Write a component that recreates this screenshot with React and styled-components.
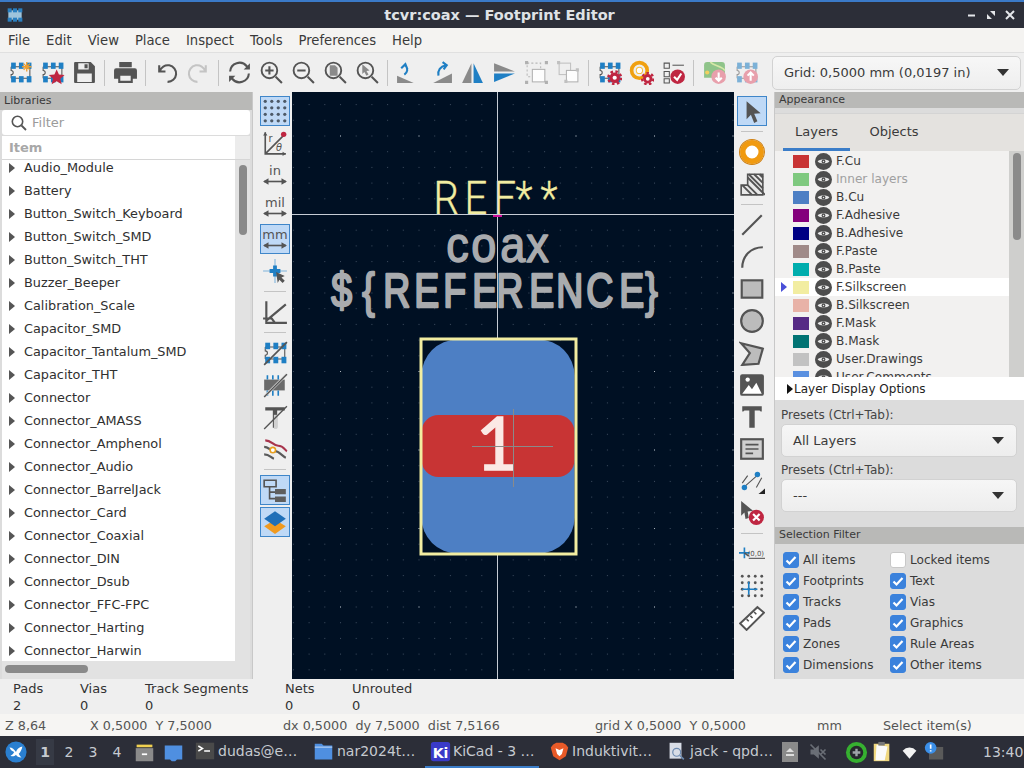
import React from 'react';
import styled, { createGlobalStyle } from 'styled-components';

const GlobalStyle = createGlobalStyle`
    html, body { margin: 0; padding: 0; height: 100%; overflow: hidden; }
    body { font-family: "DejaVu Sans", sans-serif; font-size: 13px; color: #333; background: #efefef; }
`;

const BLUE = '#1f7fc4';
const RED = '#bf2641';
const DARK = '#545454';

const libraries = ['Audio_Module', 'Battery', 'Button_Switch_Keyboard', 'Button_Switch_SMD', 'Button_Switch_THT', 'Buzzer_Beeper', 'Calibration_Scale', 'Capacitor_SMD', 'Capacitor_Tantalum_SMD', 'Capacitor_THT', 'Connector', 'Connector_AMASS', 'Connector_Amphenol', 'Connector_Audio', 'Connector_BarrelJack', 'Connector_Card', 'Connector_Coaxial', 'Connector_DIN', 'Connector_Dsub', 'Connector_FFC-FPC', 'Connector_Harting', 'Connector_Harwin'];

const layers = [
    ['F.Cu', '#c83434'], ['Inner layers', '#7fc97f', true], ['B.Cu', '#4d7fc4'], ['F.Adhesive', '#84007c'],
    ['B.Adhesive', '#000084'], ['F.Paste', '#a08a88'], ['B.Paste', '#00adad'], ['F.Silkscreen', '#f2eda1'],
    ['B.Silkscreen', '#e8b2a7'], ['F.Mask', '#562a85'], ['B.Mask', '#017373'], ['User.Drawings', '#c2c2c2'], ['User.Comments', '#5a90e0'],
];

const filters = [['All items', true], ['Locked items', false], ['Footprints', true], ['Text', true], ['Tracks', true], ['Vias', true], ['Pads', true], ['Graphics', true], ['Zones', true], ['Rule Areas', true], ['Dimensions', true], ['Other items', true]];

const stats = [['Pads', '2', 67], ['Vias', '0', 65], ['Track Segments', '0', 140], ['Nets', '0', 67], ['Unrouted', '0', 100]];

const Page = styled.div`
    width: 1024px;
    height: 768px;
    display: flex;
    flex-direction: column;
    overflow: hidden;
`;

const TitleBar = styled.div`
    height: 26px;
    border-top: 2px solid #3b7ac8;
    background: #2c2e38;
    color: #dfe2e6;
    display: flex;
    align-items: center;
    justify-content: space-between;
    padding: 0 9px 0 7px;
    font-size: 14.5px;
    font-weight: bold;
    flex: none;
`;

const TitleText = styled.div`
    flex: 1;
    text-align: center;
    padding-left: 9px;
`;

const WindowButtons = styled.div`
    display: flex;
    gap: 9px;
    align-items: center;
`;

const MenuBar = styled.div`
    height: 24px;
    background: #f4f3f1;
    display: flex;
    align-items: center;
    padding-left: 8px;
    gap: 16px;
    flex: none;
    color: #3a3a3a;
    font-size: 13.2px;
`;

const TopToolbar = styled.div`
    height: 40px;
    background: #efefef;
    border-top: 1px solid #e0e0e0;
    box-sizing: border-box;
    display: flex;
    align-items: center;
    padding-left: 4px;
    flex: none;
`;

const ToolButton = styled.div`
    width: ${p => (p.$vertical ? 30 : 32)}px;
    height: ${p => (p.$vertical ? 30 : 32)}px;
    margin: ${p => (p.$vertical ? 1 : 0)}px;
    box-sizing: border-box;
    flex: none;
    display: flex;
    align-items: center;
    justify-content: center;
    background: ${p => (p.$active ? '#bfd9f6' : 'transparent')};
    border: 1px solid ${p => (p.$active ? '#3f86c9' : 'transparent')};
`;

const Separator = styled.div`
    width: 1px;
    height: 26px;
    background: #c4c4c4;
    margin: 0 4px;
    flex: none;
`;

const HSeparator = styled.div`
    height: 1px;
    width: 22px;
    background: #c4c4c4;
    margin: 4px 0;
    flex: none;
`;

const GridCombo = styled.div`
    width: 249px;
    height: 34px;
    margin-left: 10px;
    box-sizing: border-box;
    border: 1px solid #d2d2d2;
    border-radius: 5px;
    background: linear-gradient(#f7f7f7, #eeeeee);
    display: flex;
    align-items: center;
    justify-content: space-between;
    padding: 0 11px;
    color: #3a3a3a;
`;

const Caret = styled.span`
    width: 0;
    height: 0;
    border-left: 6px solid transparent;
    border-right: 6px solid transparent;
    border-top: 7px solid #333;
`;

const Main = styled.div`
    height: 587px;
    display: flex;
    flex: none;
`;

const LeftPanel = styled.div`
    width: 253px;
    flex: none;
    display: flex;
    flex-direction: column;
    background: #dcdcdc;
    border-right: 1px solid #c8c8c8;
    box-sizing: border-box;
    margin-right: 5px;
`;

const DockTitle = styled.div`
    height: ${p => p.$h || 18}px;
    margin-top: ${p => p.$mt || 0}px;
    flex: none;
    background: #b9b9b7;
    font-size: 11px;
    line-height: ${p => (p.$h || 18) - 1}px;
    padding-left: 4px;
    color: #3a3a3a;
`;

const FilterBox = styled.div`
    height: 25px;
    margin: 0 2px 1px;
    background: #fff;
    border-radius: 3px;
    display: flex;
    align-items: center;
    padding-left: 9px;
    gap: 5px;
    color: #9b9b9b;
    flex: none;
`;

const Tree = styled.div`
    flex: 1;
    margin: 0 2px;
    background: #fff;
    display: flex;
    flex-direction: column;
    min-height: 0;
`;

const TreeHead = styled.div`
    height: 24px;
    flex: none;
    display: flex;
    border-bottom: 1px solid #d6d6d6;
    box-sizing: border-box;
    font-weight: bold;
    color: #a8a8a8;
    line-height: 24px;
    padding-left: 7px;
    position: relative;
`;

const HeadCorner = styled.div`
    position: absolute;
    right: 0;
    top: 0;
    width: 15px;
    height: 23px;
    background: #ececec;
`;

const TreeBody = styled.div`
    flex: 1;
    display: flex;
    min-height: 0;
`;

const TreeList = styled.div`
    flex: 1;
    overflow: hidden;
`;

const TreeRows = styled.div`
    margin-top: -4px;
`;

const TreeRow = styled.div`
    height: 23px;
    display: flex;
    align-items: center;
    gap: 9px;
    padding-left: 7px;
    color: #303030;
    white-space: nowrap;
    font-size: 12.85px;
`;

const TreeArrow = styled.span`
    width: 0;
    height: 0;
    border-top: 5px solid transparent;
    border-bottom: 5px solid transparent;
    border-left: 6px solid #555;
    flex: none;
`;

const VScroll = styled.div`
    width: 15px;
    flex: none;
    background: #e2e2e2;
    padding: 5px 3px 0 4px;
    box-sizing: border-box;
`;

const ScrollThumb = styled.div`
    height: ${p => p.$h}px;
    background: #8a8a8a;
    border-radius: 4px;
`;

const HScroll = styled.div`
    height: 18px;
    flex: none;
    background: #e2e2e2;
    padding: 4px 0 0 3px;
    box-sizing: border-box;
`;

const HThumb = styled.div`
    width: 83px;
    height: 8px;
    background: #8a8a8a;
    border-radius: 4px;
`;

const VToolbar = styled.div`
    width: ${p => p.$w}px;
    flex: none;
    box-sizing: border-box;
    background: #efefef;
    display: flex;
    flex-direction: column;
    align-items: flex-start;
    padding: 3px 0 0 ${p => p.$pad}px;
    ${HSeparator} { margin: 4px 0 4px 5px; }
`;

const CanvasArea = styled.div`
    width: 442px;
    flex: none;
    background: #001023;
`;

const CanvasSvg = styled.svg`
    display: block;
`;

const RightPanel = styled.div`
    width: 250px;
    flex: none;
    margin-left: 4px;
    background: #dcdcdc;
    border-left: 1px solid #c8c8c8;
    box-sizing: border-box;
    display: flex;
    flex-direction: column;
`;

const TabsBox = styled.div`
    margin-top: 5px;
    flex: none;
    background: #e4e2df;
    border-top: 1px solid #d4d4d4;
`;

const Tabs = styled.div`
    height: 37px;
    display: flex;
    color: #3a3a3a;
`;

const Tab = styled.div`
    width: ${p => p.$w}px;
    margin-left: ${p => p.$ml || 0}px;
    text-align: center;
    line-height: 36px;
    box-sizing: border-box;
    border-bottom: 3px solid ${p => (p.$active ? '#3b7dc8' : 'transparent')};
`;

const LayerWrap = styled.div`
    height: 226px;
    display: flex;
    overflow: hidden;
    background: #f2f1f0;
`;

const LayerList = styled.div`
    flex: 1;
    overflow: hidden;
    padding-top: 1px;
`;

const LayerRow = styled.div`
    height: 18px;
    display: flex;
    align-items: center;
    background: ${p => (p.$current ? '#fff' : 'transparent')};
    color: ${p => (p.$dim ? '#a0a0a0' : '#3a3a3a')};
    font-size: 12.1px;
    position: relative;
`;

const CurrentMark = styled.span`
    position: absolute;
    left: 6px;
    top: 4px;
    width: 0;
    height: 0;
    border-top: 5px solid transparent;
    border-bottom: 5px solid transparent;
    border-left: 6px solid #4a50d8;
`;

const Swatch = styled.span`
    width: 16px;
    height: 13px;
    margin: 0 6px 0 18px;
    background: ${p => p.$color};
    flex: none;
`;

const LayerName = styled.span`
    margin-left: 4px;
    white-space: nowrap;
`;

const LayerScroll = styled.div`
    width: 15px;
    flex: none;
    background: #cfcfcd;
    padding: 2px 3px 0 4px;
    box-sizing: border-box;
`;

const DisplayOptions = styled.div`
    height: 23px;
    flex: none;
    background: #fff;
    display: flex;
    align-items: center;
    gap: 1px;
    padding-left: 12px;
    font-size: 12px;
    color: #222;
`;

const OptionsArrow = styled.span`
    width: 0;
    height: 0;
    border-top: 5px solid transparent;
    border-bottom: 5px solid transparent;
    border-left: 6px solid #111;
`;

const PresetLabel = styled.div`
    font-size: 12px;
    color: #444;
    padding-left: 6px;
    height: 15px;
    line-height: 15px;
    margin-top: ${p => p.$mt}px;
    flex: none;
`;

const PresetSelect = styled.div`
    height: 33px;
    flex: none;
    margin: 1px 7px 0 6px;
    box-sizing: border-box;
    border: 1px solid #d2d2d2;
    border-radius: 5px;
    background: linear-gradient(#f6f6f6, #ededed);
    display: flex;
    align-items: center;
    justify-content: space-between;
    padding: 0 12px 0 11px;
    color: #3a3a3a;
`;

const FilterGrid = styled.div`
    display: grid;
    grid-template-columns: 107px 120px;
    grid-auto-rows: 21px;
    padding: 5px 0 0 8px;
    font-size: 12.1px;
    color: #3a3a3a;
`;

const FilterItem = styled.div`
    display: flex;
    align-items: center;
    gap: 4px;
    white-space: nowrap;
`;

const CheckBox = styled.span`
    width: 16px;
    height: 16px;
    border-radius: 3px;
    box-sizing: border-box;
    flex: none;
    display: flex;
    align-items: center;
    justify-content: center;
    background: ${p => (p.$on ? '#3b82dc' : '#fff')};
    border: 1px solid ${p => (p.$on ? '#3b82dc' : '#c8c8c8')};
`;

const Messages = styled.div`
    height: 35px;
    flex: none;
    background: #efefef;
    display: flex;
    padding: 1px 0 0 13px;
    color: #333;
    box-sizing: border-box;
`;

const StatColumn = styled.div`
    width: ${p => p.$w}px;
    flex: none;
    line-height: 17px;
`;

const StatusBar = styled.div`
    height: 22px;
    flex: none;
    background: #f6f5f3;
    display: flex;
    align-items: center;
    padding-left: 5px;
    color: #555;
    white-space: pre;
    font-size: 12.75px;
`;

const StatusCell = styled.div`
    width: ${p => p.$w}px;
    flex: none;
`;

const TaskBar = styled.div`
    height: 32px;
    flex: none;
    background: #2c2e38;
    color: #c6cad0;
    display: flex;
    align-items: center;
    font-size: 14px;
    white-space: nowrap;
    padding-left: 5px;
`;

const Desk = styled.div`
    width: ${p => p.$w}px;
    margin-left: ${p => p.$ml || 0}px;
    height: 26px;
    line-height: 26px;
    text-align: center;
    font-weight: ${p => (p.$active ? 'bold' : 'normal')};
    background: ${p => (p.$active ? '#363a45' : 'transparent')};
    flex: none;
`;

const TaskItem = styled.div`
    width: ${p => p.$w}px;
    height: 32px;
    margin-left: ${p => p.$ml || 0}px;
    flex: none;
    box-sizing: border-box;
    display: flex;
    align-items: center;
    gap: 3px;
    padding-left: ${p => p.$pl || 0}px;
    border-bottom: 2px solid ${p => (p.$active ? '#3b7dc8' : 'transparent')};
`;

const Tray = styled.div`
    width: ${p => p.$w}px;
    margin-left: ${p => p.$ml || 0}px;
    flex: none;
    display: flex;
    justify-content: center;
    align-items: center;
`;

const Clock = styled.div`
    margin-left: 38px;
`;

const Glyph = styled.svg.attrs(p => ({ viewBox: p.$box || '0 0 24 24' }))`
    width: ${p => p.$size || 24}px;
    height: ${p => p.$size || 24}px;
    flex: none;
    display: block;
`;

const Fp = ({ fade }) => (
    <g opacity={fade ? 0.55 : 1}>
        <path d="M3 6.500h18M3 17.500h18M3 6.500v3.500a2 2 0 010 4v3.500M21 6.500v11" fill="none" stroke={DARK} strokeWidth="1" />
        {[2, 9.5, 17].map(x => <rect key={x} x={x + 1} y="2.500" width="4.500" height="6" fill={BLUE} />)}
        {[2, 9.5, 17].map(x => <rect key={'b' + x} x={x + 1} y="15.500" width="4.500" height="6" fill={BLUE} />)}
    </g>
);

const Gear = ({ x, y, r = 5 }) => (
    <g transform={`translate(${x} ${y})`}>
        <circle r={r * 1.2} fill="none" stroke={RED} strokeWidth={r * 0.5} strokeDasharray="2.400 2.300" />
        <circle r={r} fill={RED} />
        <circle r={r * 0.4} fill="#fff" />
    </g>
);

const Units = ({ label }) => (
    <>
        <text x="12" y="12" textAnchor="middle" fontSize="12" fill={DARK} fontFamily="DejaVu Sans">{label}</text>
        <path d="M2 18h20" stroke={DARK} strokeWidth="1.500" />
        <path d="M1 18l5-3v6zM23 18l-5-3v6z" fill={DARK} />
    </>
);

const icons = {
    fpNew: <><Fp /><path d="M18 2v9M13.500 6.500h9M15 3.500l6 6M21 3.500l-6 6" stroke="#f0a030" strokeWidth="1.300" /></>,
    fpStar: <><Fp /><path d="M16 9l2.200 5 5.400.4-4.100 3.500 1.300 5.300-4.800-2.900-4.800 2.900 1.300-5.300-4.100-3.500 5.400-.4z" fill={RED} /></>,
    save: <path fillRule="evenodd" d="M2 3a1 1 0 011-1h15l4 4v15a1 1 0 01-1 1H3a1 1 0 01-1-1zM6 3v6h10V3zM12 4h3v4h-3zM5 13v8h14v-8z" fill={DARK} />,
    print: <path fillRule="evenodd" d="M6 2h12v5H6zM3 8h18a2 2 0 012 2v8h-4v4H5v-4H1v-8a2 2 0 012-2zM7 15v5h10v-5z" fill={DARK} />,
    undo: <path d="M5 5v6h6M5.500 11A8 8 0 1113 21" fill="none" stroke={DARK} strokeWidth="2" />,
    redo: <path d="M19 5v6h-6M18.500 11A8 8 0 1011 21" fill="none" stroke="#c4c4c4" strokeWidth="2" />,
    refresh: <><path d="M3 11a9 9 0 0116-5l2 2M21 13a9 9 0 01-16 5l-2-2" fill="none" stroke={DARK} strokeWidth="2" /><path d="M22 3v6h-6zM2 21v-6h6z" fill={DARK} /></>,
    zoomIn: <><circle cx="10" cy="10" r="7.500" fill="none" stroke={DARK} strokeWidth="1.800" /><path d="M16 16l6 6M6 10h8M10 6v8" stroke={DARK} strokeWidth="2" /></>,
    zoomOut: <><circle cx="10" cy="10" r="7.500" fill="none" stroke={DARK} strokeWidth="1.800" /><path d="M16 16l6 6M6 10h8" stroke={DARK} strokeWidth="2" /></>,
    zoomFit: <><circle cx="10" cy="10" r="7.500" fill="none" stroke={DARK} strokeWidth="1.800" /><path d="M16 16l6 6" stroke={DARK} strokeWidth="2" /><path d="M6.500 5h5l2.500 2.500V15H6.500z" fill="#8a8a8a" /></>,
    zoomSel: <><circle cx="10" cy="10" r="7.500" fill="none" stroke={DARK} strokeWidth="1.800" /><path d="M16 16l6 6" stroke={DARK} strokeWidth="2" /><path d="M7 4l7 6-3 .5 2 3.500-2 1-2-3.500-2 2z" fill="#8a8a8a" /></>,
    rotL: <><path d="M1 15l16 7H1z" fill="#8a8a8a" /><path d="M8 14c3-2 4-6 1-9M5 8l4-4 2 5" fill="none" stroke={BLUE} strokeWidth="2" /></>,
    rotR: <><path d="M23 13v9H5z" fill="#8a8a8a" /><path d="M10 15c-1-5 2-9 7-10M14 2l4 3-3 4" fill="none" stroke={BLUE} strokeWidth="2" /></>,
    flipH: <><path d="M11 3v19H2z" fill="#8a8a8a" /><path d="M13 3v19h9z" fill={BLUE} /></>,
    flipV: <><path d="M2 3l20 8H2z" fill="#8a8a8a" /><path d="M2 13h20L2 21z" fill={BLUE} /></>,
    group: <><path d="M3 3h13v13H3z" fill="none" stroke="#b8b8b8" strokeDasharray="2 2" /><rect x="8" y="9" width="12" height="12" fill="#fdfdfd" stroke="#b0b0b0" /><path d="M1 1h3v3H1zM20 1h3v3h-3zM1 20h3v3H1zM20 20h3v3h-3z" fill="#b0b0b0" /></>,
    ungroup: <><rect x="3" y="3" width="11" height="11" fill="none" stroke="#c0c0c0" /><rect x="10" y="10" width="11" height="11" fill="#fdfdfd" stroke="#b0b0b0" /><path d="M1 1h3v3H1zM19 8h3v3h-3zM8 19h3v3H8z" fill="#c0c0c0" /></>,
    fpGear: <><Fp /><Gear x={17} y={17} /></>,
    padGear: <><circle cx="10" cy="10" r="7.500" fill="none" stroke="#f0a010" strokeWidth="3.500" /><circle cx="10" cy="10" r="3" fill="#fff" stroke="#f6c040" strokeWidth="1" /><Gear x={18} y={18} r={4.500} /></>,
    drc: <><path d="M3 3h5v5H3zM3 11h5v5H3zM3 18h5v4H3z" fill="none" stroke={DARK} /><path d="M11 5h11" stroke={DARK} /><circle cx="16" cy="16" r="7" fill={RED} /><path d="M12.500 16l3 3 4-6" fill="none" stroke="#fff" strokeWidth="2" /></>,
    pcbIn: <><path d="M2 5a3 3 0 013-3h14a3 3 0 013 3v12H2z" fill="#8fc48a" /><path d="M8 2c4 4 10 3 14 8" fill="none" stroke="#d6e8a8" strokeWidth="1.500" /><circle cx="5" cy="12" r="2" fill="#f2d060" /><circle cx="16" cy="16" r="7" fill="#e8a0ac" /><path d="M16 12v8M13 17l3 3 3-3" fill="none" stroke="#fff" strokeWidth="2" /></>,
    pcbOut: <><Fp fade /><circle cx="16" cy="16" r="7" fill="#e8a0ac" /><path d="M16 20v-8M13 15l3-3 3 3" fill="none" stroke="#fff" strokeWidth="2" /></>,
    grid: <>{[3, 9, 15, 21].flatMap(y => [3, 9, 15, 21].map(x => <circle key={x + '-' + y} cx={x} cy={y} r="1.500" fill="#4d5a68" />))}</>,
    polar: <><path d="M3 2v20h19M3 22L20 5" fill="none" stroke={DARK} strokeWidth="1.500" /><path d="M1 5l2-3 2 3M19 20l3 2-3 2" fill={DARK} /><circle cx="20" cy="4" r="2.500" fill={RED} /><text x="6" y="11" fontSize="9" fill={DARK} fontFamily="DejaVu Sans">r</text><text x="13" y="19" fontSize="9" fontStyle="italic" fill={DARK} fontFamily="DejaVu Sans">θ</text></>,
    inch: <Units label="in" />,
    mil: <Units label="mil" />,
    mm: <Units label="mm" />,
    cross: <><path d="M12 1v22M1 12h22" stroke="#7fb4dc" /><path d="M12 7v10M7 12h10" stroke={BLUE} strokeWidth="3.500" /><path d="M13 13l8 3.500-3 1.500 3 3-2 2-3-3-1.500 3z" fill={DARK} /></>,
    angle: <path d="M4 2v20h19M4 20L22 5M1 18h8l3 4" fill="none" stroke={DARK} strokeWidth="2" />,
    fpRat: <><Fp /><path d="M2 23L23 2" stroke={DARK} strokeWidth="1.500" /></>,
    chip: <><rect x="2" y="7" width="19" height="10" fill="#6a6a6a" /><path d="M5 3v4M10 3v4M15 3v4M5 17v5M10 17v5M15 17v5" stroke={BLUE} strokeWidth="1.500" /><path d="M2 23L23 2" stroke="#ddd" strokeWidth="2.500" /><path d="M2 23L23 2" stroke={DARK} strokeWidth="1.200" /></>,
    textOff: <><path d="M3 3h18v3H14v16h-4V6H3z" fill={DARK} /><path d="M11 10h3v13h-3z" fill="#d0d0d0" /><path d="M2 23L23 2" stroke={DARK} strokeWidth="1.200" /></>,
    tracks: <><path d="M3 4c6 0 7 5 12 5s6 4 8 5" fill="none" stroke="#a8344c" strokeWidth="2" /><path d="M2 10c4 0 6 4 10 4s7 5 10 6" fill="none" stroke="#5a5a5a" strokeWidth="2" /><path d="M2 17c5 0 6 3 9 4" fill="none" stroke="#5a5a5a" strokeWidth="2" /><circle cx="10" cy="13" r="2.500" fill="#fff" stroke="#e8a020" strokeWidth="1.500" /></>,
    tree: <><path d="M2 3h11v6H2zM7 9v11h5M7 14h5" fill="none" stroke={DARK} strokeWidth="1.500" /><path d="M12 11h10v5H12zM12 18h10v5H12z" fill="#5e5e5e" /></>,
    layers: <><path d="M12 10l10 6-10 7L2 16z" fill="#f09a20" /><path d="M12 2l10 7-10 7L2 9z" fill="#1f6fb8" /></>,
    arrow: <path d="M7 3l13 11-6 .5 3 7-3 1.500-3-7.500-4 4z" fill={DARK} />,
    ring: <><circle cx="12" cy="12" r="8.500" fill="#fff" stroke="#f09a10" strokeWidth="5" /><circle cx="12" cy="12" r="11.500" fill="none" stroke="#d08010" strokeWidth="1" /></>,
    hatch: <><path d="M8 3h14v19H2v-9h6z" fill="#e8e8e8" stroke={DARK} strokeWidth="1.500" /><path d="M9 3l13 13M14 3l8 8M3 13l9 9M8 13l9 9M8 6l16 16M19 3l3 3" stroke={DARK} strokeWidth="1.800" /></>,
    line: <path d="M3 21L21 3" stroke={DARK} strokeWidth="2" />,
    arc: <path d="M3 22C3 11 11 3 22 3" fill="none" stroke={DARK} strokeWidth="2" />,
    rect: <rect x="2.500" y="4" width="19" height="16" fill="#bcbcbc" stroke={DARK} strokeWidth="2" />,
    circle: <circle cx="12" cy="12" r="10" fill="#bcbcbc" stroke={DARK} strokeWidth="2" />,
    poly: <path d="M2 3l20 5-4 14-15 1 7-11z" fill="#bcbcbc" stroke={DARK} strokeWidth="2" />,
    image: <><rect x="1" y="2" width="22" height="20" rx="2" fill={DARK} /><path d="M3 20l6-8 3 4 4-6 5 10z" fill="#fff" /><circle cx="8" cy="7" r="2" fill="#fff" /></>,
    text: <path d="M3 2h18v5h-1l-1-1h-4.500v16h-5V6H5L4 7H3z" fill={DARK} />,
    textbox: <><rect x="2" y="3" width="20" height="18" fill="#d0d0d0" stroke={DARK} strokeWidth="2" /><path d="M6 8h12M6 12h12M6 16h7" stroke={DARK} strokeWidth="1.500" /></>,
    dim: <><path d="M3 19L19 5M8 7l-5 7M21 9l-5 9" fill="none" stroke={DARK} /><circle cx="5" cy="18" r="2.500" fill={BLUE} /><circle cx="17" cy="6" r="2.500" fill={BLUE} /><path d="M24 19v5h-6z" fill="#222" /></>,
    del: <><path d="M2 1l11 9-5 .5 1 6-3 1-1-6-3 3z" fill={DARK} /><circle cx="16" cy="16" r="7" fill={RED} /><path d="M13 13l6 6M19 13l-6 6" stroke="#fff" strokeWidth="2" /></>,
    origin: <><path d="M5 6v10M0 11h10" stroke={BLUE} strokeWidth="1.500" /><path d="M5 11l4 3" stroke={DARK} strokeWidth="1.500" /><text x="8" y="14" fontSize="6.400" fill={DARK} fontFamily="DejaVu Sans">(0,0)</text><path d="M9 16h15" stroke={DARK} /></>,
    gridOrigin: <>{[3, 9, 15, 21].flatMap(y => [3, 9, 15, 21].map(x => <circle key={x + '-' + y} cx={x} cy={y} r="1.300" fill={DARK} />))}<path d="M9 8v12M3 15h14" stroke={BLUE} strokeWidth="1.500" /></>,
    measure: <><path d="M1 17L17 2l6 5L7 23z" fill="#fff" stroke={DARK} strokeWidth="1.800" /><path d="M7 13l2 2M10.500 10l2 2M14 6.500l2 2" stroke={DARK} strokeWidth="1.500" /></>,
};

const Icon = ({ name, size }) => <Glyph $size={size}>{icons[name]}</Glyph>;

const topTools = ['fpNew', 'fpStar', 'save', '|', 'print', '|', 'undo', 'redo', '|', 'refresh', 'zoomIn', 'zoomOut', 'zoomFit', 'zoomSel', '|', 'rotL', 'rotR', 'flipH', 'flipV', 'group', 'ungroup', '|', 'fpGear', 'padGear', 'drc', '|', 'pcbIn', 'pcbOut'];
const leftTools = [['grid', 1], ['polar'], ['inch'], ['mil'], ['mm', 1], ['cross'], '|', ['angle'], '|', ['fpRat'], ['chip'], ['textOff'], ['tracks'], '|', ['tree', 1], ['layers', 1]];
const rightTools = [['arrow', 1], '|', ['ring'], ['hatch'], '|', ['line'], ['arc'], ['rect'], ['circle'], ['poly'], ['image'], ['text'], ['textbox'], ['dim'], ['del'], '|', ['origin'], ['gridOrigin'], ['measure']];

const VTools = ({ items, w, pad }) => (
    <VToolbar $w={w} $pad={pad}>
        {items.map((t, i) => (t === '|'
            ? <HSeparator key={i} />
            : <ToolButton key={i} $vertical $active={t[1]}><Icon name={t[0]} size={26} /></ToolButton>))}
    </VToolbar>
);

const Eye = () => (
    <Glyph $size={17} $box="0 0 16 16">
        <circle cx="8" cy="8" r="8" fill="#4d4d4d" />
        <path d="M2.500 8C4 5.500 12 5.500 13.500 8 12 10.500 4 10.500 2.500 8z" fill="#e8e8e8" />
        <circle cx="8" cy="8" r="1.800" fill="#4d4d4d" />
        <circle cx="8" cy="8" r=".7" fill="#e8e8e8" />
    </Glyph>
);

const Tick = () => (
    <Glyph $size={12} $box="0 0 12 12">
        <path d="M1.500 6.500l3 3 6-6.500" fill="none" stroke="#fff" strokeWidth="2.200" />
    </Glyph>
);

// board text is a stroke font in the picture, so every glyph gets its own x
const BoardText = ({ text, xs, y, size, scale, lsb, ...rest }) => (
    <text
        transform={`translate(${xs[0]} ${y}) scale(${scale} 1)`}
        x={xs.map(x => (x - xs[0]) / scale - lsb).join(' ')}
        fontSize={size}
        strokeLinejoin="round"
        {...rest}
    >
        {text}
    </text>
);

const Canvas = () => (
    <CanvasSvg width="442" height="587" viewBox="292 92 442 587">
        <defs>
            <pattern id="dots" x="497" y="214" width="15.700" height="15.700" patternUnits="userSpaceOnUse">
                <rect width="1" height="1" fill="#3e4d60" />
            </pattern>
            <pattern id="dots5" x="497" y="214" width="78.500" height="78.500" patternUnits="userSpaceOnUse">
                <rect width="1" height="1" fill="#aab2bb" />
            </pattern>
        </defs>
        <rect x="292" y="92" width="442" height="587" fill="url(#dots)" />
        <rect x="292" y="92" width="442" height="587" fill="url(#dots5)" />
        <BoardText text="REF**" xs={[437, 468, 497, 519, 544]} y={214} size={47} scale={0.85} lsb={4} fontFamily="Roboto" fontWeight="300" fill="#f2eda1" stroke="#f2eda1" strokeWidth="0.400" />
        <path d="M292 214.500h442M497.500 92v587" stroke="#c6ccd4" strokeWidth="1" />
        <path d="M493 216h9" stroke="#d0109a" strokeWidth="2" />
        <g fontFamily="Liberation Sans" fill="#a9abae" stroke="#a9abae">
            <BoardText text="coax" xs={[448, 473, 502, 528]} y={262} size={50} scale={0.9} lsb={2} strokeWidth="1.500" />
            <BoardText text={'${REFERENCE}'} xs={[334, 365, 386, 417, 446, 475, 499, 532, 559, 589, 622, 648]} y={307} size={48} scale={0.78} lsb={3.500} strokeWidth="2.400" />
        </g>
        <rect x="421.500" y="339.500" width="153" height="214" rx="36" fill="#4d7fc4" />
        <rect x="421.500" y="415" width="153" height="62" rx="17" fill="#c83434" />
        <rect x="421" y="339" width="155" height="215" fill="none" stroke="#f2eda1" strokeWidth="3" />
        <text x="497" y="470" textAnchor="middle" fontFamily="Lato" fontWeight="400" fontSize="73" fill="#fbe9e5" stroke="#fbe9e5" strokeWidth="1.500">1</text>
        <path d="M472 446.500h81M513.500 409v78" stroke="#8a8a8a" strokeWidth="1" />
    </CanvasSvg>
);

const Logo = () => (
    <Glyph $size={22} $box="0 0 24 24">
        <circle cx="12" cy="12" r="11.500" fill="#2a7fd0" />
        <path d="M5 7c3 0 5 2 7 5 1-3 3-5 7-6-1 4-2 6-4 8 1 2 2 3 3 4-3 0-5-1-6-3-2 2-4 2-6 1 2-1 3-2 4-4-2-1-4-2-5-5z" fill="#fff" />
    </Glyph>
);

const App = () => (
    <Page>
        <GlobalStyle />
        <TitleBar>
            <Glyph $size={16} $box="0 0 24 24">
                <rect x="2" y="5" width="20" height="14" fill="#9fc4dc" />
                {[1, 9, 17].map(x => <rect key={x} x={x} y="2" width="6" height="6" fill="#2a7fc0" />)}
                {[1, 9, 17].map(x => <rect key={x} x={x} y="16" width="6" height="6" fill="#2a7fc0" />)}
            </Glyph>
            <TitleText>tcvr:coax — Footprint Editor</TitleText>
            <WindowButtons>
                <Glyph $size={10} $box="0 0 10 10"><path d="M1 5.500h7" stroke="#e4e6ea" strokeWidth="2" /></Glyph>
                <Glyph $size={10} $box="0 0 10 10"><path d="M4 1h5v5zM6 9H1V4z" fill="#e4e6ea" /></Glyph>
                <Glyph $size={10} $box="0 0 10 10"><path d="M1 1l8 8M9 1l-8 8" stroke="#e4e6ea" strokeWidth="2" /></Glyph>
            </WindowButtons>
        </TitleBar>
        <MenuBar>
            {['File', 'Edit', 'View', 'Place', 'Inspect', 'Tools', 'Preferences', 'Help'].map(m => <span key={m}>{m}</span>)}
        </MenuBar>
        <TopToolbar>
            {topTools.map((t, i) => (t === '|'
                ? <Separator key={i} />
                : <ToolButton key={i}><Icon name={t} size={25} /></ToolButton>))}
            <GridCombo>Grid: 0,5000 mm (0,0197 in)<Caret /></GridCombo>
        </TopToolbar>
        <Main>
            <LeftPanel>
                <DockTitle>Libraries</DockTitle>
                <FilterBox>
                    <Glyph $size={16} $box="0 0 16 16">
                        <circle cx="6.500" cy="6.500" r="5.200" fill="none" stroke="#555" strokeWidth="1.600" />
                        <path d="M10.500 10.500l4.500 4.500" stroke="#555" strokeWidth="1.800" />
                    </Glyph>
                    Filter
                </FilterBox>
                <Tree>
                    <TreeHead>Item<HeadCorner /></TreeHead>
                    <TreeBody>
                        <TreeList>
                            <TreeRows>
                                {libraries.map(l => <TreeRow key={l}><TreeArrow />{l}</TreeRow>)}
                            </TreeRows>
                        </TreeList>
                        <VScroll><ScrollThumb $h={70} /></VScroll>
                    </TreeBody>
                    <HScroll><HThumb /></HScroll>
                </Tree>
            </LeftPanel>
            <VTools items={leftTools} w={34} pad={1} />
            <CanvasArea><Canvas /></CanvasArea>
            <VTools items={rightTools} w={36} pad={2} />
            <RightPanel>
                <DockTitle $h={16}>Appearance</DockTitle>
                <TabsBox>
                    <Tabs>
                        <Tab $w={67} $ml={8} $active>Layers</Tab>
                        <Tab $w={88}>Objects</Tab>
                    </Tabs>
                    <LayerWrap>
                        <LayerList>
                            {layers.map(([name, color, dim]) => (
                                <LayerRow key={name} $dim={dim} $current={name === 'F.Silkscreen'}>
                                    {name === 'F.Silkscreen' && <CurrentMark />}
                                    <Swatch $color={color} />
                                    <Eye />
                                    <LayerName>{name}</LayerName>
                                </LayerRow>
                            ))}
                        </LayerList>
                        <LayerScroll><ScrollThumb $h={87} /></LayerScroll>
                    </LayerWrap>
                    <DisplayOptions><OptionsArrow />Layer Display Options</DisplayOptions>
                </TabsBox>
                <PresetLabel $mt={8}>Presets (Ctrl+Tab):</PresetLabel>
                <PresetSelect>All Layers<Caret /></PresetSelect>
                <PresetLabel $mt={6}>Presets (Ctrl+Tab):</PresetLabel>
                <PresetSelect>---<Caret /></PresetSelect>
                <DockTitle $h={17} $mt={15}>Selection Filter</DockTitle>
                <FilterGrid>
                    {filters.map(([name, on]) => (
                        <FilterItem key={name}>
                            <CheckBox $on={on}>{on && <Tick />}</CheckBox>
                            {name}
                        </FilterItem>
                    ))}
                </FilterGrid>
            </RightPanel>
        </Main>
        <Messages>
            {stats.map(([label, value, w]) => (
                <StatColumn key={label} $w={w}>{label}<br />{value}</StatColumn>
            ))}
        </Messages>
        <StatusBar>
            <StatusCell $w={85}>Z 8,64</StatusCell>
            <StatusCell $w={193}>X 0,5000  Y 7,5000</StatusCell>
            <StatusCell $w={312}>dx 0,5000  dy 7,5000  dist 7,5166</StatusCell>
            <StatusCell $w={222}>grid X 0,5000  Y 0,5000</StatusCell>
            <StatusCell $w={66}>mm</StatusCell>
            <StatusCell $w={120}>Select item(s)</StatusCell>
        </StatusBar>
        <TaskBar>
            <Logo />
            <Desk $w={18} $ml={9} $active>1</Desk>
            <Desk $w={30}>2</Desk>
            <Desk $w={18}>3</Desk>
            <Desk $w={30}>4</Desk>
            <Tray $w={20} $ml={2}>
                <Glyph $size={21}><path d="M3 3h18v3H3z" fill="#f0d050" /><path d="M2 7h20v15H2z" fill="#8a8a8a" /><path d="M9 14h6" stroke="#fff" strokeWidth="2" /></Glyph>
            </Tray>
            <Tray $w={20} $ml={9}>
                <Glyph $size={21}><path d="M2 4h20v16h-6l-2 2h-4l-2-2H2z" fill="#4f8fe0" /></Glyph>
            </Tray>
            <TaskItem $w={130} $pl={12}>
                <Glyph $size={20}><rect x="1" y="2" width="22" height="20" fill="#4a4a4a" /><path d="M4 6l5 3-5 3M11 12h7" fill="none" stroke="#fff" strokeWidth="1.800" /></Glyph>
                dudas@e…
            </TaskItem>
            <TaskItem $w={112}>
                <Glyph $size={21}><path d="M2 3h8l2 2h10v16H2z" fill="#4f8fe0" /><path d="M2 7h20" stroke="#d4e4f8" /></Glyph>
                nar2024t…
            </TaskItem>
            <TaskItem $w={114} $pl={5} $active>
                <Tray $w={20}>
                    <Glyph $size={21}><rect x="1" y="1" width="22" height="22" rx="3" fill="#3a3ac8" /><text x="3" y="19" fontFamily="DejaVu Sans" fontWeight="700" fontSize="16" fill="#fff">Ki</text></Glyph>
                </Tray>
                KiCad - 3 …
            </TaskItem>
            <TaskItem $w={118} $ml={8} $pl={3}>
                <Glyph $size={19}><path d="M4 3l4-2h8l4 2 3 4-3 11-8 5-8-5L1 7z" fill="#e85a28" /><path d="M7 8l5 2 5-2-2 7-3 3-3-3z" fill="#fff" /></Glyph>
                Induktivit…
            </TaskItem>
            <TaskItem $w={117} $pl={3}>
                <Glyph $size={19}><rect x="2" y="1" width="15" height="20" fill="#d8dde6" /><circle cx="11" cy="13" r="5" fill="none" stroke="#6c8ab0" strokeWidth="1.500" /><path d="M15 17l5 5" stroke="#6c8ab0" strokeWidth="2" /></Glyph>
                jack - qpd…
            </TaskItem>
            <Tray $w={17}>
                <Glyph $size={21} $box="0 0 17 21"><rect width="16" height="20" fill="#8a8a8a" /><path d="M4 10l4-4 4 4zM4 12h8v2H4z" fill="#ddd" /></Glyph>
            </Tray>
            <Tray $w={20} $ml={9}>
                <Glyph $size={20}><path d="M3 9h4l6-5v16l-6-5H3z" fill="#6a6e76" /><path d="M3 3l18 18M15 9l6 6M21 9l-6 6" stroke="#6a6e76" strokeWidth="2" /></Glyph>
            </Tray>
            <Tray $w={24} $ml={16}>
                <Glyph $size={23}><circle cx="12" cy="12" r="11" fill="#36b030" /><circle cx="12" cy="12" r="7" fill="#26282c" /><path d="M12 8v8M8 12h8" stroke="#9ea4a8" strokeWidth="2.500" /></Glyph>
            </Tray>
            <Tray $w={22} $ml={3}>
                <Glyph $size={22}><rect x="3" y="3" width="17" height="19" fill="#f0d880" /><path d="M6 4l12 2-3 15H5z" fill="#fafafa" /><rect x="8" y="1" width="7" height="4" fill="#777" /></Glyph>
            </Tray>
            <Tray $w={16} $ml={8}>
                <Glyph $size={15}><path d="M1 9a15 15 0 0122 0L12 22z" fill="#f2f2f2" /></Glyph>
            </Tray>
            <Tray $w={22} $ml={6}>
                <Glyph $size={20}><rect x="6" y="6" width="17" height="15" fill="#5a5a5a" /><circle cx="8" cy="7" r="7" fill="#3b8fe8" /><path d="M8 3v5M8 10v1.500" stroke="#fff" strokeWidth="2" /></Glyph>
            </Tray>
            <Clock>13:40</Clock>
        </TaskBar>
    </Page>
);

export default App;
